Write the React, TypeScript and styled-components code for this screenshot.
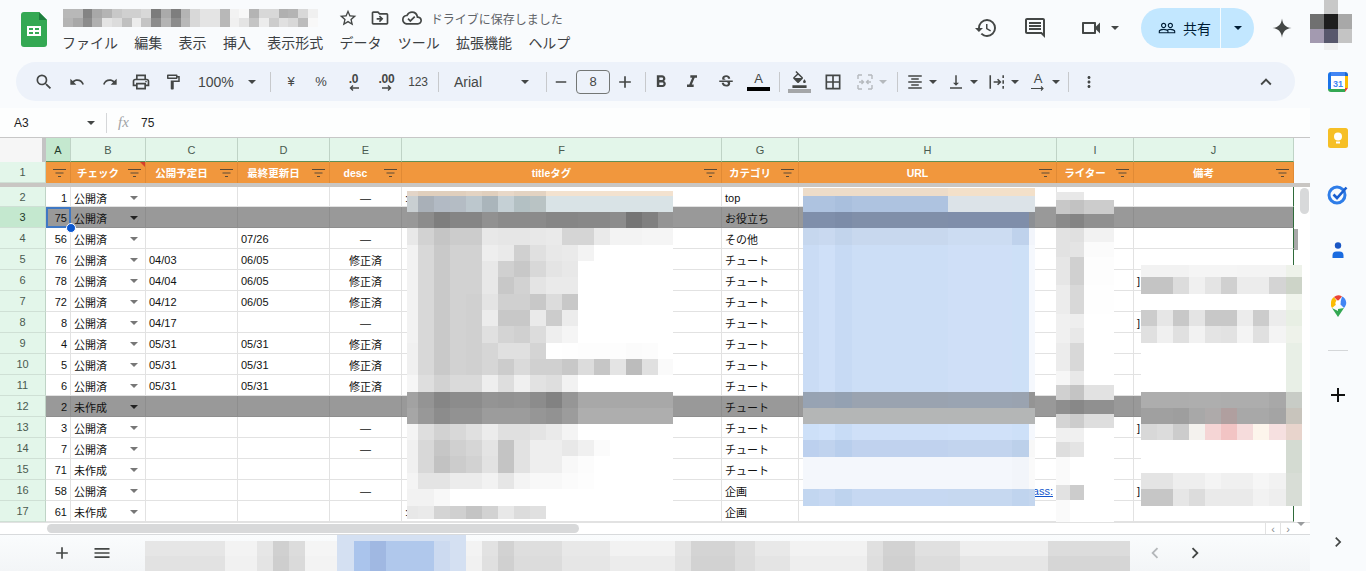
import React from 'react';
import styled, { createGlobalStyle } from 'styled-components';
import {
  MdAdd, MdBorderAll, MdChevronLeft, MdChevronRight, MdFormatAlignCenter, MdFormatBold, MdFormatColorFill,
  MdFormatItalic, MdHistory, MdKeyboardArrowUp, MdMenu, MdMoreVert, MdOutlineCloudDone, MdOutlineComment,
  MdOutlineDriveFileMove, MdOutlineFormatPaint, MdOutlinePrint, MdOutlineVideocam, MdPeopleOutline, MdRedo,
  MdRemove, MdSearch, MdStarBorder, MdStrikethroughS, MdUndo, MdVerticalAlignBottom,
} from 'react-icons/md';

const FONT = '"Liberation Sans", "Noto Sans CJK JP", sans-serif';

const GlobalStyle = createGlobalStyle`
  html, body { margin: 0; padding: 0; background: #f9fbfd; }
  body { font-family: ${FONT}; overflow: hidden; }
`;

/* ---------- mosaic (pixelated parts of the screenshot) ---------- */

const tone = (c: string) => (c.length === 2 ? `#${c}${c}${c}` : `#${c}`);

const MosaicGrid = styled.div<{ $cols: string; $rows: string }>`
  display: grid;
  grid-template-columns: ${(p) => p.$cols};
  grid-template-rows: ${(p) => p.$rows};
`;

const Float = styled.div<{ $x: number; $y: number }>`
  position: absolute;
  left: ${(p) => p.$x}px;
  top: ${(p) => p.$y}px;
`;

const Mosaic = ({ cols, rows, data }: { cols: number[]; rows: number[]; data: string[][] }) => (
  <MosaicGrid $cols={cols.map((c) => `${c}px`).join(' ')} $rows={rows.map((r) => `${r}px`).join(' ')}>
    {rows.map((_, y) =>
      cols.map((__, x) => <div key={`${y}-${x}`} style={{ background: tone(data[y]?.[x] ?? 'ff') }} />),
    )}
  </MosaicGrid>
);

const F_COLS = [11, 16, 16, 16, 16, 16, 16, 16, 16, 16, 16, 16, 16, 16, 16, 16, 15];
const F_ROWS = [5, 16, 16, 17, 16, 16, 17, 16, 16, 17, 16, 16, 17, 16, 16, 16, 16, 17, 16, 17, 13];
const F_DATA = [
  ['e3d5c8', 'e0cfbd', 'e0cfbd', 'e0cfbd', 'e3d3c2', 'e0cfbd', 'e8d8c8', 'e3d3c2', 'e3d3c2', 'f3e2cf', 'f3e2cf', 'f3e2cf', 'f3e2cf', 'f3e2cf', 'f3e2cf', 'f3e2cf', 'f3e2cf'],
  ['c9cfd2', 'a9b0b8', 'b2bac4', 'b4bcc4', 'bcc7cd', 'aab5bb', 'c5d0d5', 'b3c0c3', 'b9c3c4', 'd9e3e6', 'd9e3e6', 'd9e3e6', 'd9e3e6', 'd9e3e6', 'd9e3e6', 'd9e3e6', 'd9e3e6'],
  ['98', '8c', '7e', '85', '85', '91', '8b', '8b', '8b', '86', '86', '88', '88', '8c', '75', '80', '94'],
  ['e8', 'd2', 'c5', 'cc', 'cc', 'e8', 'e6', 'e6', 'e8', 'ea', 'd5', 'd5', 'ea', 'f3', 'f3', 'f5', 'f5'],
  ['f2', 'd8', 'c9', 'd2', 'd2', 'ee', 'ea', 'd0', 'e0', 'e8', 'ea', 'f3'],
  ['f2', 'd8', 'c9', 'd2', 'd2', 'e8', 'd0', 'c8', 'd8', 'e4', 'e8'],
  ['f2', 'd8', 'c9', 'd2', 'd2', 'e8', 'c8', 'd2', 'e4', 'ea', 'ea'],
  ['f2', 'd8', 'c9', 'd2', 'd0', 'e4', 'd0', 'd0', 'c8', 'dc', 'c8'],
  ['f2', 'd8', 'c9', 'd2', 'd0', 'ec', 'c8', 'c8', 'ea', 'cc', 'ec'],
  ['f2', 'd8', 'c9', 'd2', 'd0', 'e0', 'd4', 'd0', 'dc', 'ee', 'f5'],
  ['f0', 'd8', 'c9', 'd2', 'd0', 'd6', 'e0', 'e0', 'd4', 'ff', 'fe', 'fd', 'fd', 'fd', 'fb', 'fc'],
  ['f0', 'd8', 'c9', 'd2', 'd0', 'd6', 'cc', 'da', 'd0', 'd0', 'c8', 'dc', 'c6', 'e4', 'bc', 'e0', 'fa'],
  ['f6', 'de', 'd2', 'da', 'da', 'ee', 'de', 'f0', 'e2', 'de', 'f2'],
  ['a2', '94', '86', '8c', '8c', '94', '92', '94', '8c', '82', '96', 'a8', 'a8', 'a8', 'a8', 'a8', 'a8'],
  ['a6', '98', '8c', '92', '92', '9c', '9c', '9c', '96', '92', '9c', 'ae', 'ae', 'ae', 'ae', 'ae', 'ae'],
  ['f4', 'de', 'd2', 'd8', 'e0', 'ec', 'e0', 'e0', 'e4', 'ea', 'f4'],
  ['f0', 'd8', 'c6', 'd0', 'd6', 'e4', 'c4', 'e2', 'ee', 'ee', 'e8', 'f0', 'fb'],
  ['f0', 'd8', 'c2', 'cc', 'd2', 'e2', 'c4', 'e2', 'ee', 'ee', 'f8', 'fc'],
  ['f4', 'e4', 'e4', 'ec', 'ec', 'f2', 'e6', 'f4', 'f8', 'f8', 'fb', 'fd'],
  ['f2', 'f2', 'f8'],
  ['e8', 'ea', 'd4', 'd0', 'c4', 'd2', 'e8', 'dc', 'e0'],
];

const H_COLS = [16, 16, 17, 96, 64, 17, 6];
const H_ROWS = [8, 16, 16, 17, 147, 16, 16, 16, 17, 32, 17];
const H_DATA = [
  ['eddcc9', 'eddcc9', 'eddcc9', 'eddcc9', 'f3e0c9', 'f3e0c9', 'f3e0c9'],
  ['aec3e0', 'aec3e0', 'a9bfdd', 'aec3e0', 'dce3e8', 'dce3e8', 'dce3e8'],
  ['7f8fab', '7f8fab', '7c8ca8', '808fa9', '7f8eaa', '7f8eaa', '8c8f94'],
  ['c6d7ee', 'c9d9f0', 'c2d4ec', 'c8d8ee', 'ccdcf2', 'bfd2ec', 'f2f5fb'],
  ['cadcf5', 'cfe0f8', 'c7daf4', 'ccdef6', 'cfdff7', 'cde0f7', 'f5f8fd'],
  ['97a3b3', '98a3b3', '94a1b2', '9aa3b0', '9aa4b2', '9aa3b0', '94'],
  ['b4b6b6', 'b4b6b6', 'b4b6b6', 'b4b6b6', 'b4b6b6', 'b4b6b6', 'b4b6b6'],
  ['cde0f8', 'd0e2fa', 'c8dcf6', 'cfe0f8', 'd0e1f9', 'cde0f8', 'f5f8fd'],
  ['bcd0ee', 'c0d3ee', 'b8ceec', 'c0d2ee', 'c2d4ee', 'bcd0ea', 'f8'],
  ['f4f7fc', 'f4f7fc', 'f4f7fc', 'f4f7fc', 'f4f7fc', 'f2f5fa', 'fa'],
  ['c2d6f0', 'c6d8f2', 'bed3ee', 'c6d8f2', 'c6d8f0', 'c0d4ee', 'c4d6ee'],
];

const I_COLS = [14, 14, 30];
const I_ROWS = [8, 14, 14, 14, 15, 28, 29, 14, 15, 28, 14, 15, 14, 14, 14, 15, 28, 15, 22];
const I_DATA = [
  ['e8', 'e8'], ['c8', 'c2', 'cc'], ['8a', '84', '90'], ['e2', 'e0', 'f2'], ['e2', 'e4', 'fb'],
  ['e6', 'd0', 'fd'], ['ec', 'd8', 'fe'], ['f0', 'ee'], ['f0', 'e8'], ['ec', 'd8'],
  ['f6', 'e8'], ['d0', 'c4', 'e2'], ['8e', '88', '90'], ['d4', 'cc', 'de'], ['f0', 'f0'],
  ['de', 'e4'], ['fa'], ['e2', 'cc'], ['fa'],
];

const J_COLS = [16, 16, 16, 16, 16, 16, 16, 16, 17, 16];
const J_ROWS = [12, 17, 16, 16, 17, 49, 16, 16, 16, 33, 16, 17];
const J_DATA = [
  ['f2', 'f2', 'f2', 'f5', 'f5', 'f5', 'f4', 'f4', 'f4', 'eef2ea'],
  ['c4', 'c4', 'dc', 'f0', 'e4', 'd0', 'ec', 'ec', 'd4', 'cdd4c8'],
  ['ff', 'ff', 'ff', 'ff', 'ff', 'ff', 'ff', 'ff', 'ff', 'f0f4ec'],
  ['cc', 'e6', 'c8', 'e4', 'c8', 'c8', 'ec', 'cc', 'ec', 'e8efe4'],
  ['e0', 'f0', 'e0', 'f2', 'e4', 'e2', 'f4', 'e0', 'f4', 'eef2ea'],
  ['ff', 'ff', 'ff', 'ff', 'ff', 'ff', 'ff', 'ff', 'ff', 'e8efe6'],
  ['ad', 'ad', 'ad', 'ae', 'ae', 'ad', 'ad', 'ad', 'a8', 'c8ccc6'],
  ['a0', 'a0', '9e', 'a8', 'aeaaaa', 'b09f9f', 'a8', 'a8', 'a4', 'c8c4bc'],
  ['d8', 'dc', 'cc', 'f4f2ee', 'f5d5d5', 'f2c4c4', 'f6dcdc', 'fdf5ec', 'f6e0e0', 'e8d4cc'],
  ['ff', 'ff', 'ff', 'ff', 'ff', 'ff', 'ff', 'ff', 'ff', 'd4dbd2'],
  ['e4', 'e4', 'ee', 'ee', 'f4', 'f0', 'f0', 'f6', 'f2', 'd8ddd6'],
  ['c6', 'c6', 'e6', 'dc', 'ea', 'ea', 'ea', 'f2', 'ee', 'd8ddd6'],
];

const TITLE_COLS = Array(26).fill(9.8);
const TITLE_DATA = [
  ['b8', 'b8', '84', 'a8', 'b4', 'c8', 'd0', 'd0', 'd8', '7c', 'aa', '7e', 'b4', 'd8', 'e4', 'e4', 'b8', 'f2', 'f8', 'b4', 'd8', 'd8', 'b0', 'b4', 'd8', 'f0'],
  ['b4', 'a8', '8c', 'b0', 'e4', 'dc', 'c0', 'ec', 'c4', '8c', 'b4', '8c', 'b8', 'd8', 'e4', 'e4', 'b8', 'f0', 'e4', 'c4', 'ec', 'cc', 'e0', 'd8', 'bc', 'f8'],
];

const AVATAR_DATA = [
  ['f9fbfd', 'c8', 'f9fbfd'],
  ['70', '1e', 'a8'],
  ['a39ab0', '58586c', 'c4'],
  ['f9fbfd', 'f0', 'f9fbfd'],
];

const TAB_COLS = [80, 32, 16, 16, 16, 32, 17, 16, 16, 48, 16, 16, 16, 16, 16, 48, 48, 65, 16, 44, 20, 35, 77, 16, 32, 45, 88, 82];
const TAB_DATA = [
  ['e6', 'f3', 'e6', 'd0', 'dc', 'f5', 'd4e0f2', 'aac4ec', 'a0b8e2', 'b0c8ec', 'ccdaf0', 'd4e0f2', 'f3', 'e2', 'd2', 'de', 'e8', 'f2', 'e4', 'd4', 'dd', 'e8', 'f2', 'e0', 'd2', 'e0', 'ee', 'dc'],
  ['e2', 'f1', 'e4', 'ce', 'da', 'f3', 'd4e0f2', 'aac4ec', 'a0b8e2', 'b0c8ec', 'ccdaf0', 'd4e0f2', 'f1', 'e0', 'd0', 'dc', 'e6', 'ec', 'e2', 'd2', 'dc', 'e4', 'ee', 'de', 'd0', 'dc', 'e6', 'd6'],
];

/* ---------- top bar ---------- */

const Root = styled.div`
  position: relative;
  width: 1366px;
  height: 571px;
  overflow: hidden;
  background: #f9fbfd;
  color: #444746;
  font-family: ${FONT};
`;

const TopBar = styled.header`
  display: flex;
  height: 62px;
  padding-left: 21px;
`;

const Logo = styled.svg`
  width: 26px;
  height: 35px;
  margin-top: 12px;
  flex: none;
`;

const DocInfo = styled.div`
  display: flex;
  flex-direction: column;
  margin-left: 16px;
  padding-top: 9px;
`;

const TitleRow = styled.div`
  display: flex;
  align-items: center;
  height: 18px;
`;

const TitleIcons = styled.div`
  display: flex;
  align-items: center;
  gap: 12px;
  margin-left: 20px;
  font-size: 20px;
  color: #444746;
`;

const SaveNote = styled.span`
  margin-left: -3px;
  font-size: 12px;
  color: #5f6368;
  white-space: nowrap;
`;

const MenuRow = styled.nav`
  display: flex;
  gap: 16.3px;
  margin-top: 6px;
  margin-left: -1px;
  font-size: 14px;
  line-height: 20px;
  color: #3c4043;
`;

const Actions = styled.div`
  display: flex;
  align-items: center;
  height: 56px;
  margin-left: auto;
  color: #444746;
`;

const ActionIcon = styled.span<{ $w: number; $pl?: number }>`
  display: flex;
  align-items: center;
  justify-content: center;
  width: ${(p) => p.$w}px;
  padding-left: ${(p) => p.$pl ?? 0}px;
  box-sizing: border-box;
  font-size: 24px;
`;

const Share = styled.div`
  display: flex;
  align-items: center;
  width: 113px;
  height: 40px;
  margin-left: 14px;
  border-radius: 20px;
  background: #c2e7ff;
  color: #001d35;
  font-size: 14px;
`;

const ShareMain = styled.div`
  display: flex;
  align-items: center;
  gap: 7px;
  width: 80px;
  height: 100%;
  padding-left: 17px;
  box-sizing: border-box;
  border-right: 1px solid #f4fbff;
`;

const ShareMore = styled.div`
  flex: 1;
  display: flex;
  justify-content: center;
`;

const Avatar = styled.div`
  align-self: flex-start;
  margin-right: 14px;
`;

const Caret = styled.i<{ $c?: string; $ml?: number }>`
  display: inline-block;
  flex: none;
  width: 0;
  height: 0;
  margin-left: ${(p) => p.$ml ?? 0}px;
  border-left: 4px solid transparent;
  border-right: 4px solid transparent;
  border-top: 4px solid ${(p) => p.$c ?? '#444746'};
`;

/* ---------- toolbar ---------- */

const Body = styled.div`
  display: flex;
  height: 509px;
`;

const Main = styled.main`
  position: relative;
  width: 1310px;
  display: flex;
  flex-direction: column;
`;

const Toolbar = styled.div`
  display: flex;
  align-items: center;
  width: 1279px;
  height: 39px;
  margin: 0 0 7px 16px;
  padding: 0 13px 0 11px;
  box-sizing: border-box;
  border-radius: 20px;
  background: #edf2fa;
  color: #444746;
`;

const Tool = styled.div<{ $w: number; $push?: boolean }>`
  display: flex;
  flex: none;
  flex-direction: column;
  align-items: center;
  justify-content: center;
  width: ${(p) => p.$w}px;
  height: 100%;
  margin-left: ${(p) => (p.$push ? 'auto' : '0')};
  font-size: 18px;
  color: #444746;
`;

const ToolPair = styled.div<{ $w: number }>`
  display: flex;
  flex: none;
  align-items: center;
  justify-content: center;
  gap: 5px;
  width: ${(p) => p.$w}px;
  font-size: 18px;
`;

const ToolText = styled.span<{ $size?: number; $bold?: boolean }>`
  font-size: ${(p) => p.$size ?? 12}px;
  font-weight: ${(p) => (p.$bold ? 700 : 400)};
  line-height: 12px;
  letter-spacing: -0.2px;
`;

const Sep = styled.div<{ $l?: number; $r?: number }>`
  flex: none;
  width: 1px;
  height: 20px;
  margin: 0 ${(p) => p.$r ?? 0}px 0 ${(p) => p.$l ?? 0}px;
  background: #c7c9cc;
`;

const Picker = styled.div<{ $w: number; $pl: number; $pr: number }>`
  display: flex;
  flex: none;
  align-items: center;
  justify-content: space-between;
  width: ${(p) => p.$w}px;
  padding: 0 ${(p) => p.$pr}px 0 ${(p) => p.$pl}px;
  box-sizing: border-box;
  font-size: 14px;
`;

const SizeBox = styled.div`
  flex: none;
  width: 34px;
  height: 24px;
  margin: 0 1px;
  box-sizing: border-box;
  border: 1px solid #747775;
  border-radius: 4px;
  font-size: 13px;
  line-height: 22px;
  text-align: center;
`;

const ColorBar = styled.div<{ $c: string; $w?: number }>`
  width: ${(p) => p.$w ?? 23}px;
  height: 4px;
  margin-top: 1px;
  background: ${(p) => p.$c};
`;

const LetterA = styled.span`
  font-size: 13px;
  line-height: 14px;
`;

/* ---------- formula bar ---------- */

const FormulaBar = styled.div`
  display: flex;
  align-items: center;
  height: 29px;
  padding-left: 14px;
  border-bottom: 1px solid #c7c7c7;
  background: #fdfefe;
  font-size: 12px;
  color: #1f1f1f;
`;

const NameBox = styled.div`
  display: flex;
  align-items: center;
  justify-content: space-between;
  width: 81px;
  margin-right: 11px;
`;

const BarDivider = styled.div`
  width: 1px;
  height: 20px;
  background: #d5d7d9;
`;

const Fx = styled.span`
  margin: 0 8px 0 11px;
  width: 15px;
  font-family: "Liberation Serif", serif;
  font-style: italic;
  font-size: 15px;
  color: #a0a3a6;
`;

/* ---------- sheet ---------- */

const COLUMNS = '46px 25px 75px 92px 92px 72px 320px 77px 258px 77px 160px 16px';
const LETTERS = ['A', 'B', 'C', 'D', 'E', 'F', 'G', 'H', 'I', 'J'];

const GridRow = styled.div`
  display: grid;
  grid-template-columns: ${COLUMNS};
  height: 21px;
  &:first-child {
    height: 20px;
  }
`;

const HeaderRow = styled(GridRow)`
  height: 24px;
  &:first-child {
    height: 24px;
  }
`;

const TitleGridRow = styled(GridRow)`
  &:first-child {
    height: 21px;
  }
`;

const Corner = styled.div`
  background: #f6f6f6;
  border-right: 4px solid #c4c4c4;
`;

const ColHead = styled.div<{ $active?: boolean }>`
  display: flex;
  align-items: center;
  justify-content: center;
  padding-top: 1px;
  box-sizing: border-box;
  background: ${(p) => (p.$active ? '#c4e8cf' : '#e3f6ea')};
  border-right: 1px solid #bfd3c6;
  border-bottom: 1px solid #5f8f55;
  font-size: 11px;
  color: ${(p) => (p.$active ? '#1f3a2a' : '#4a5a50')};
`;

const RowHead = styled.div<{ $active?: boolean }>`
  display: flex;
  align-items: center;
  justify-content: center;
  background: ${(p) => (p.$active ? '#c4e8cf' : '#e3f6ea')};
  border-right: 1px solid #bfd3c6;
  border-bottom: 1px solid #cfe0d5;
  font-size: 11px;
  color: ${(p) => (p.$active ? '#1f3a2a' : '#4a5a50')};
`;

const OrangeCell = styled.div`
  position: relative;
  display: flex;
  align-items: center;
  justify-content: center;
  padding-right: 20px;
  box-sizing: border-box;
  background: #f1973d;
  border-right: 1px solid #e08a35;
  font-size: 10.5px;
  font-weight: 700;
  color: #fff;
  white-space: nowrap;
`;

const FilterIcon = styled.svg`
  position: absolute;
  right: 4px;
  top: 6px;
  width: 13px;
  height: 10px;
`;

const NoteMark = styled.i`
  position: absolute;
  right: 0;
  top: 0;
  width: 0;
  height: 0;
  border-left: 5px solid transparent;
  border-top: 5px solid #d8402a;
`;

const FreezeBar = styled.div`
  height: 4px;
  background: #c9c6c3;
`;

const Rows = styled.div`
  position: relative;
  display: flex;
  flex-direction: column;
  height: 335px;
  background: #fff;
`;

const Cell = styled.div<{ $dark?: boolean; $align?: string; $last?: boolean }>`
  position: relative;
  display: flex;
  align-items: center;
  justify-content: ${(p) => p.$align ?? 'flex-start'};
  padding: 2px 3px 0;
  box-sizing: border-box;
  overflow: hidden;
  white-space: nowrap;
  background: ${(p) => (p.$dark ? '#999' : '#fff')};
  border-right: 1px solid ${(p) => (p.$last ? '#2f6b3a' : p.$dark ? '#8e8e8e' : '#e2e2e2')};
  border-bottom: 1px solid ${(p) => (p.$dark ? '#8e8e8e' : '#e2e2e2')};
  font-size: 11px;
  color: #111;
`;

const StatusCell = styled(Cell)`
  justify-content: space-between;
  padding-right: 7px;
`;

const CutText = styled.span`
  margin-right: 18px;
  font-size: 10px;
  color: #2b3a55;
`;

const Selected = styled.div`
  position: absolute;
  left: 46px;
  top: 20px;
  width: 25px;
  height: 21px;
  box-sizing: border-box;
  border: 2px solid #3f78c4;
`;

const Handle = styled.div`
  position: absolute;
  left: 66px;
  top: 36px;
  width: 10px;
  height: 10px;
  box-sizing: border-box;
  border: 1px solid #fff;
  border-radius: 50%;
  background: #0b57d0;
`;

const Thumb = styled.div`
  position: absolute;
  left: 1300px;
  top: 1px;
  width: 9px;
  height: 26px;
  border-radius: 5px;
  background: #d8d9da;
`;

const EdgeMark = styled.div`
  position: absolute;
  left: 1294px;
  top: 42px;
  width: 4px;
  height: 21px;
  background: #a9a9a9;
`;

const ScrollDown = styled.div`
  position: absolute;
  left: 1297px;
  top: 325px;
`;

const Link = styled.span`
  color: #1155cc;
  text-decoration: underline;
`;

const HScroll = styled.div`
  display: flex;
  align-items: center;
  height: 13px;
  padding-left: 47px;
  box-sizing: border-box;
  background: #fff;
  border-top: 1px solid #e2e2e2;
  border-bottom: 1px solid #d8dadc;
`;

const HThumb = styled.div`
  width: 532px;
  height: 9px;
  border-radius: 5px;
  background: #d8d9da;
`;

const ScrollArrows = styled.div`
  display: flex;
  height: 100%;
  margin-left: auto;
  margin-right: 15px;
`;

const ScrollArrow = styled.div`
  display: flex;
  align-items: center;
  justify-content: center;
  width: 14px;
  border-left: 1px solid #e2e2e2;
  font-size: 11px;
  color: #8a8d90;
`;

const TabBar = styled.div`
  position: relative;
  display: flex;
  align-items: flex-start;
  height: 36px;
  padding-left: 52px;
  box-sizing: border-box;
  font-size: 20px;
  color: #444746;
  background: linear-gradient(#fafcfd, #f3f5f7);
`;

const TabIcon = styled.span<{ $w: number }>`
  display: flex;
  align-items: center;
  justify-content: center;
  width: ${(p) => p.$w}px;
  height: 36px;
`;

const Tabs = styled.div`
  margin: 6px 0 0 13px;
`;

const ActiveTop = styled.div`
  position: absolute;
  left: 337px;
  top: 0;
  width: 129px;
  height: 6px;
  background: #d4e0f2;
`;

const TabArrows = styled.div`
  display: flex;
  margin-left: 5px;
`;

const Arrow = styled.span<{ $muted?: boolean }>`
  display: flex;
  align-items: center;
  justify-content: center;
  width: 40px;
  height: 36px;
  color: ${(p) => (p.$muted ? '#b4b7ba' : '#444746')};
`;

/* ---------- side panel ---------- */

const Side = styled.aside`
  display: flex;
  flex: 1;
  flex-direction: column;
  align-items: center;
  padding: 8px 0 0 0;
  box-sizing: border-box;
`;

const SideIcon = styled.svg`
  width: 24px;
  height: 24px;
  margin-bottom: 32px;
`;

const SideRule = styled.div`
  width: 20px;
  height: 1px;
  margin: 0 0 32px;
  background: #d5d7d9;
`;

const SidePlus = styled.div`
  font-size: 24px;
  line-height: 24px;
  color: #111;
`;

const SideToggle = styled.div`
  margin-top: auto;
  margin-bottom: 16px;
  font-size: 20px;
  line-height: 20px;
  color: #444746;
`;

/* ---------- data ---------- */

type Row = { n: number; id: string; st: string; c?: string; d?: string; e?: string; g: string; dark?: boolean };

const ROWS: Row[] = [
  { n: 2, id: '1', st: '公開済', e: '—', g: 'top' },
  { n: 3, id: '75', st: '公開済', g: 'お役立ち', dark: true },
  { n: 4, id: '56', st: '公開済', d: '07/26', e: '—', g: 'その他' },
  { n: 5, id: '76', st: '公開済', c: '04/03', d: '06/05', e: '修正済', g: 'チュート' },
  { n: 6, id: '78', st: '公開済', c: '04/04', d: '06/05', e: '修正済', g: 'チュート' },
  { n: 7, id: '72', st: '公開済', c: '04/12', d: '06/05', e: '修正済', g: 'チュート' },
  { n: 8, id: '8', st: '公開済', c: '04/17', e: '—', g: 'チュート' },
  { n: 9, id: '4', st: '公開済', c: '05/31', d: '05/31', e: '修正済', g: 'チュート' },
  { n: 10, id: '5', st: '公開済', c: '05/31', d: '05/31', e: '修正済', g: 'チュート' },
  { n: 11, id: '6', st: '公開済', c: '05/31', d: '05/31', e: '修正済', g: 'チュート' },
  { n: 12, id: '2', st: '未作成', g: 'チュート', dark: true },
  { n: 13, id: '3', st: '公開済', e: '—', g: 'チュート' },
  { n: 14, id: '7', st: '公開済', e: '—', g: 'チュート' },
  { n: 15, id: '71', st: '未作成', g: 'チュート' },
  { n: 16, id: '58', st: '公開済', e: '—', g: '企画' },
  { n: 17, id: '61', st: '未作成', g: '企画' },
];

// rows whose long text shows a few pixels beside the pixelated part
const CUT_F = [2, 17];
const CUT_H = [3, 4, 5, 6, 7, 8, 14];
const CUT_J = [6, 8, 13, 16];

const HEADS = ['', 'チェック', '公開予定日', '最終更新日', 'desc', 'titleタグ', 'カテゴリ', 'URL', 'ライター', '備考'];

const MENU = ['ファイル', '編集', '表示', '挿入', '表示形式', 'データ', 'ツール', '拡張機能', 'ヘルプ'];

const Filter = () => (
  <FilterIcon viewBox="0 0 13 10">
    <path d="M0 1.5h13M2.5 5h8M5 8.5h3" stroke="#5a4a36" strokeWidth="1.1" fill="none" />
  </FilterIcon>
);

const App = () => (
  <Root>
    <GlobalStyle />
    <TopBar>
      <Logo viewBox="0 0 26 35">
        <path d="M3 0h15l8 8v24a3 3 0 0 1-3 3H3a3 3 0 0 1-3-3V3a3 3 0 0 1 3-3z" fill="#34a853" />
        <path d="M18 0l8 8h-8z" fill="#1e7e3e" />
        <path d="M6 14h14v10H6z" fill="#fff" />
        <path d="M8 16h4v2H8zM14 16h4v2h-4zM8 20h4v2H8zM14 20h4v2h-4z" fill="#34a853" />
      </Logo>
      <DocInfo>
        <TitleRow>
          <Mosaic cols={TITLE_COLS} rows={[9, 9]} data={TITLE_DATA} />
          <TitleIcons>
            <MdStarBorder />
            <MdOutlineDriveFileMove />
            <MdOutlineCloudDone />
            <SaveNote>ドライブに保存しました</SaveNote>
          </TitleIcons>
        </TitleRow>
        <MenuRow>
          {MENU.map((m) => (
            <span key={m}>{m}</span>
          ))}
        </MenuRow>
      </DocInfo>
      <Actions>
        <ActionIcon $w={48}><MdHistory /></ActionIcon>
        <ActionIcon $w={50}><MdOutlineComment /></ActionIcon>
        <ActionIcon $w={67} $pl={11}><MdOutlineVideocam /><Caret $ml={8} /></ActionIcon>
        <Share>
          <ShareMain><MdPeopleOutline size={18} />共有</ShareMain>
          <ShareMore><Caret $c="#001d35" /></ShareMore>
        </Share>
        <ActionIcon $w={56}>
          <svg width="22" height="22" viewBox="0 0 24 24">
            <path d="M12 1.5C12.7 8 16 11.3 22.5 12 16 12.7 12.7 16 12 22.5 11.3 16 8 12.7 1.5 12 8 11.3 11.3 8 12 1.5Z" fill="#444746" />
          </svg>
        </ActionIcon>
        <Avatar>
          <Mosaic cols={[14, 14, 14]} rows={[14, 15, 14, 7]} data={AVATAR_DATA} />
        </Avatar>
      </Actions>
    </TopBar>

    <Body>
      <Main>
        <Toolbar>
          <Tool $w={33}><MdSearch size={20} /></Tool>
          <Tool $w={34}><MdUndo size={16} /></Tool>
          <Tool $w={31}><MdRedo size={16} /></Tool>
          <Tool $w={32}><MdOutlinePrint size={20} /></Tool>
          <Tool $w={31}><MdOutlineFormatPaint /></Tool>
          <Picker $w={76} $pl={10} $pr={8}>100%<Caret /></Picker>
          <Sep $l={6} $r={5} />
          <Tool $w={30}><ToolText $size={13}>¥</ToolText></Tool>
          <Tool $w={30}><ToolText $size={13}>%</ToolText></Tool>
          <Tool $w={35}>
            <ToolText $bold>.0</ToolText>
            <svg width="10" height="6" viewBox="0 0 10 6"><path d="M10 3H2M4 .5L1.5 3 4 5.5" stroke="#444746" strokeWidth="1.4" fill="none" /></svg>
          </Tool>
          <Tool $w={31}>
            <ToolText $bold>.00</ToolText>
            <svg width="10" height="6" viewBox="0 0 10 6"><path d="M0 3h8M6 .5L8.5 3 6 5.5" stroke="#444746" strokeWidth="1.4" fill="none" /></svg>
          </Tool>
          <Tool $w={32}><ToolText>123</ToolText></Tool>
          <Sep $l={4} />
          <Picker $w={101} $pl={15} $pr={11}>Arial<Caret /></Picker>
          <Sep $l={6} />
          <Tool $w={28}><MdRemove /></Tool>
          <SizeBox>8</SizeBox>
          <Tool $w={28}><MdAdd size={20} /></Tool>
          <Sep $l={6} />
          <Tool $w={29}><MdFormatBold size={20} /></Tool>
          <Tool $w={34}><MdFormatItalic size={20} /></Tool>
          <Tool $w={33}><MdStrikethroughS /></Tool>
          <Tool $w={33}><LetterA>A</LetterA><ColorBar $c="#000" /></Tool>
          <Sep $l={4} />
          <Tool $w={38}><MdFormatColorFill size={17} /><ColorBar $c="#a4a6a8" /></Tool>
          <Tool $w={30}><MdBorderAll size={20} /></Tool>
          <ToolPair $w={46}>
            <svg width="18" height="18" viewBox="0 0 18 18">
              <path d="M2 2v4M16 2v4M2 12v4M16 12v4M2 2h4M12 2h4M2 16h4M12 16h4M3 9h4M15 9h-4M5.5 7L7.5 9 5.5 11M12.5 7L10.500 9 12.5 11" stroke="#b5b9bd" strokeWidth="1.4" fill="none" />
            </svg>
            <Caret $c="#b5b9bd" />
          </ToolPair>
          <Sep $l={3} $r={3} />
          <ToolPair $w={41}><MdFormatAlignCenter /><Caret /></ToolPair>
          <ToolPair $w={41}><MdVerticalAlignBottom /><Caret /></ToolPair>
          <ToolPair $w={41}>
            <svg width="18" height="18" viewBox="0 0 16 16">
              <path d="M2 2v12M13.500 2v2.500M13.500 6.500v3M13.500 11.500V14M5 8h6M8.500 5.500L11 8 8.500 10.500" stroke="#444746" strokeWidth="1.4" fill="none" />
            </svg>
            <Caret />
          </ToolPair>
          <ToolPair $w={41}>
            <Tool $w={18}>
              <LetterA>A</LetterA>
              <svg width="14" height="5" viewBox="0 0 14 5"><path d="M0 2.500h12M10 .5l2 2-2 2" stroke="#444746" strokeWidth="1.1" fill="none" /></svg>
            </Tool>
            <Caret />
          </ToolPair>
          <Sep $l={3} />
          <Tool $w={40}><MdMoreVert /></Tool>
          <Tool $w={32} $push><MdKeyboardArrowUp size={22} /></Tool>
        </Toolbar>

        <FormulaBar>
          <NameBox>A3<Caret /></NameBox>
          <BarDivider />
          <Fx>fx</Fx>
          75
        </FormulaBar>

        <HeaderRow>
          <Corner />
          {LETTERS.map((l) => (
            <ColHead key={l} $active={l === 'A'}>{l}</ColHead>
          ))}
        </HeaderRow>
        <TitleGridRow>
          <RowHead>1</RowHead>
          {HEADS.map((h, i) => (
            <OrangeCell key={i}>
              {h}
              <Filter />
              {i === 1 && <NoteMark />}
            </OrangeCell>
          ))}
        </TitleGridRow>
        <FreezeBar />

        <Rows>
          {ROWS.map((r) => (
            <GridRow key={r.n}>
              <RowHead $active={r.n === 3}>{r.n}</RowHead>
              <Cell $dark={r.dark} $align="flex-end">{r.id}</Cell>
              <StatusCell $dark={r.dark}>
                {r.st}
                <Caret $c={r.dark ? '#222' : '#777'} />
              </StatusCell>
              <Cell $dark={r.dark}>{r.c}</Cell>
              <Cell $dark={r.dark}>{r.d}</Cell>
              <Cell $dark={r.dark} $align="center">{r.e}</Cell>
              <Cell $dark={r.dark}>{CUT_F.includes(r.n) && ':'}</Cell>
              <Cell $dark={r.dark}>{r.g}</Cell>
              <Cell $dark={r.dark} $align="flex-end">
                {r.n === 16 && <Link>pass:</Link>}
                {CUT_H.includes(r.n) && <CutText>:</CutText>}
              </Cell>
              <Cell $dark={r.dark} />
              <Cell $dark={r.dark} $last>{CUT_J.includes(r.n) && ']'}</Cell>
            </GridRow>
          ))}
          <Selected />
          <Handle />
          <Thumb />
          <EdgeMark />
          <ScrollDown><Caret $c="#9a9c9e" /></ScrollDown>
        </Rows>

        <HScroll>
          <HThumb />
          <ScrollArrows>
            <ScrollArrow>‹</ScrollArrow>
            <ScrollArrow>›</ScrollArrow>
          </ScrollArrows>
        </HScroll>

        <TabBar>
          <ActiveTop />
          <TabIcon $w={20}><MdAdd /></TabIcon>
          <TabIcon $w={60}><MdMenu /></TabIcon>
          <Tabs>
            <Mosaic cols={TAB_COLS} rows={[15, 15]} data={TAB_DATA} />
          </Tabs>
          <TabArrows>
            <Arrow $muted><MdChevronLeft size={22} /></Arrow>
            <Arrow><MdChevronRight size={22} /></Arrow>
          </TabArrows>
        </TabBar>

        <Float $x={407} $y={129}><Mosaic cols={F_COLS} rows={F_ROWS} data={F_DATA} /></Float>
        <Float $x={803} $y={126}><Mosaic cols={H_COLS} rows={H_ROWS} data={H_DATA} /></Float>
        <Float $x={1056} $y={130}><Mosaic cols={I_COLS} rows={I_ROWS} data={I_DATA} /></Float>
        <Float $x={1141} $y={203}><Mosaic cols={J_COLS} rows={J_ROWS} data={J_DATA} /></Float>
      </Main>

      <Side>
        <SideIcon viewBox="0 0 24 24">
          <path d="M5 2h14v4H5z" fill="#4285f4" />
          <path d="M2 5a3 3 0 0 1 3-3v17H2z" fill="#1a73e8" />
          <path d="M19 2a3 3 0 0 1 3 3v1h-3z" fill="#1967d2" />
          <path d="M19 6h3v12h-3z" fill="#fbbc04" />
          <path d="M5 19h14v3H5a3 3 0 0 1-3-3z" fill="#34a853" />
          <path d="M19 18h3l-3 4z" fill="#ea4335" />
          <path d="M5 6h14v13H5z" fill="#fff" />
          <text x="12" y="16.500" textAnchor="middle" fontSize="9" fontWeight="700" fill="#4285f4" fontFamily="Liberation Sans">31</text>
        </SideIcon>
        <SideIcon viewBox="0 0 24 24">
          <rect x="2" y="2" width="20" height="20" rx="2.500" fill="#f6bf26" />
          <circle cx="12" cy="10.500" r="4" fill="#fff" />
          <path d="M10 15.500h4v2h-4z" fill="#fff" />
        </SideIcon>
        <SideIcon viewBox="0 0 24 24">
          <circle cx="11" cy="13" r="8" fill="none" stroke="#2f7de8" strokeWidth="3" />
          <path d="M7.500 12.500l3.500 3.500L20.500 5.500" fill="none" stroke="#1a5fd0" strokeWidth="2.600" />
        </SideIcon>
        <SideIcon viewBox="0 0 24 24">
          <circle cx="12" cy="7.500" r="3.200" fill="#1a56c4" />
          <path d="M6.500 20v-2.500a4 4 0 0 1 4-4h3a4 4 0 0 1 4 4V20z" fill="#1a6be0" />
        </SideIcon>
        <SideIcon viewBox="0 0 24 24">
          <path d="M12 23L6 14l6 3z" fill="#34a853" />
          <path d="M12 23l6-9-6 1z" fill="#34a853" />
          <path d="M5 9a7 7 0 0 1 3-6l4 6-6 5a7 7 0 0 1-1-5z" fill="#fbbc04" />
          <path d="M8 3a7 7 0 0 1 8-.5L12 7z" fill="#ea4335" />
          <path d="M16 2.500A7 7 0 0 1 18 14l-4-4z" fill="#4285f4" />
          <circle cx="12" cy="9" r="2.600" fill="#fff" />
        </SideIcon>
        <SideRule />
        <SidePlus><MdAdd /></SidePlus>
        <SideToggle><MdChevronRight /></SideToggle>
      </Side>
    </Body>
  </Root>
);

export default App;
